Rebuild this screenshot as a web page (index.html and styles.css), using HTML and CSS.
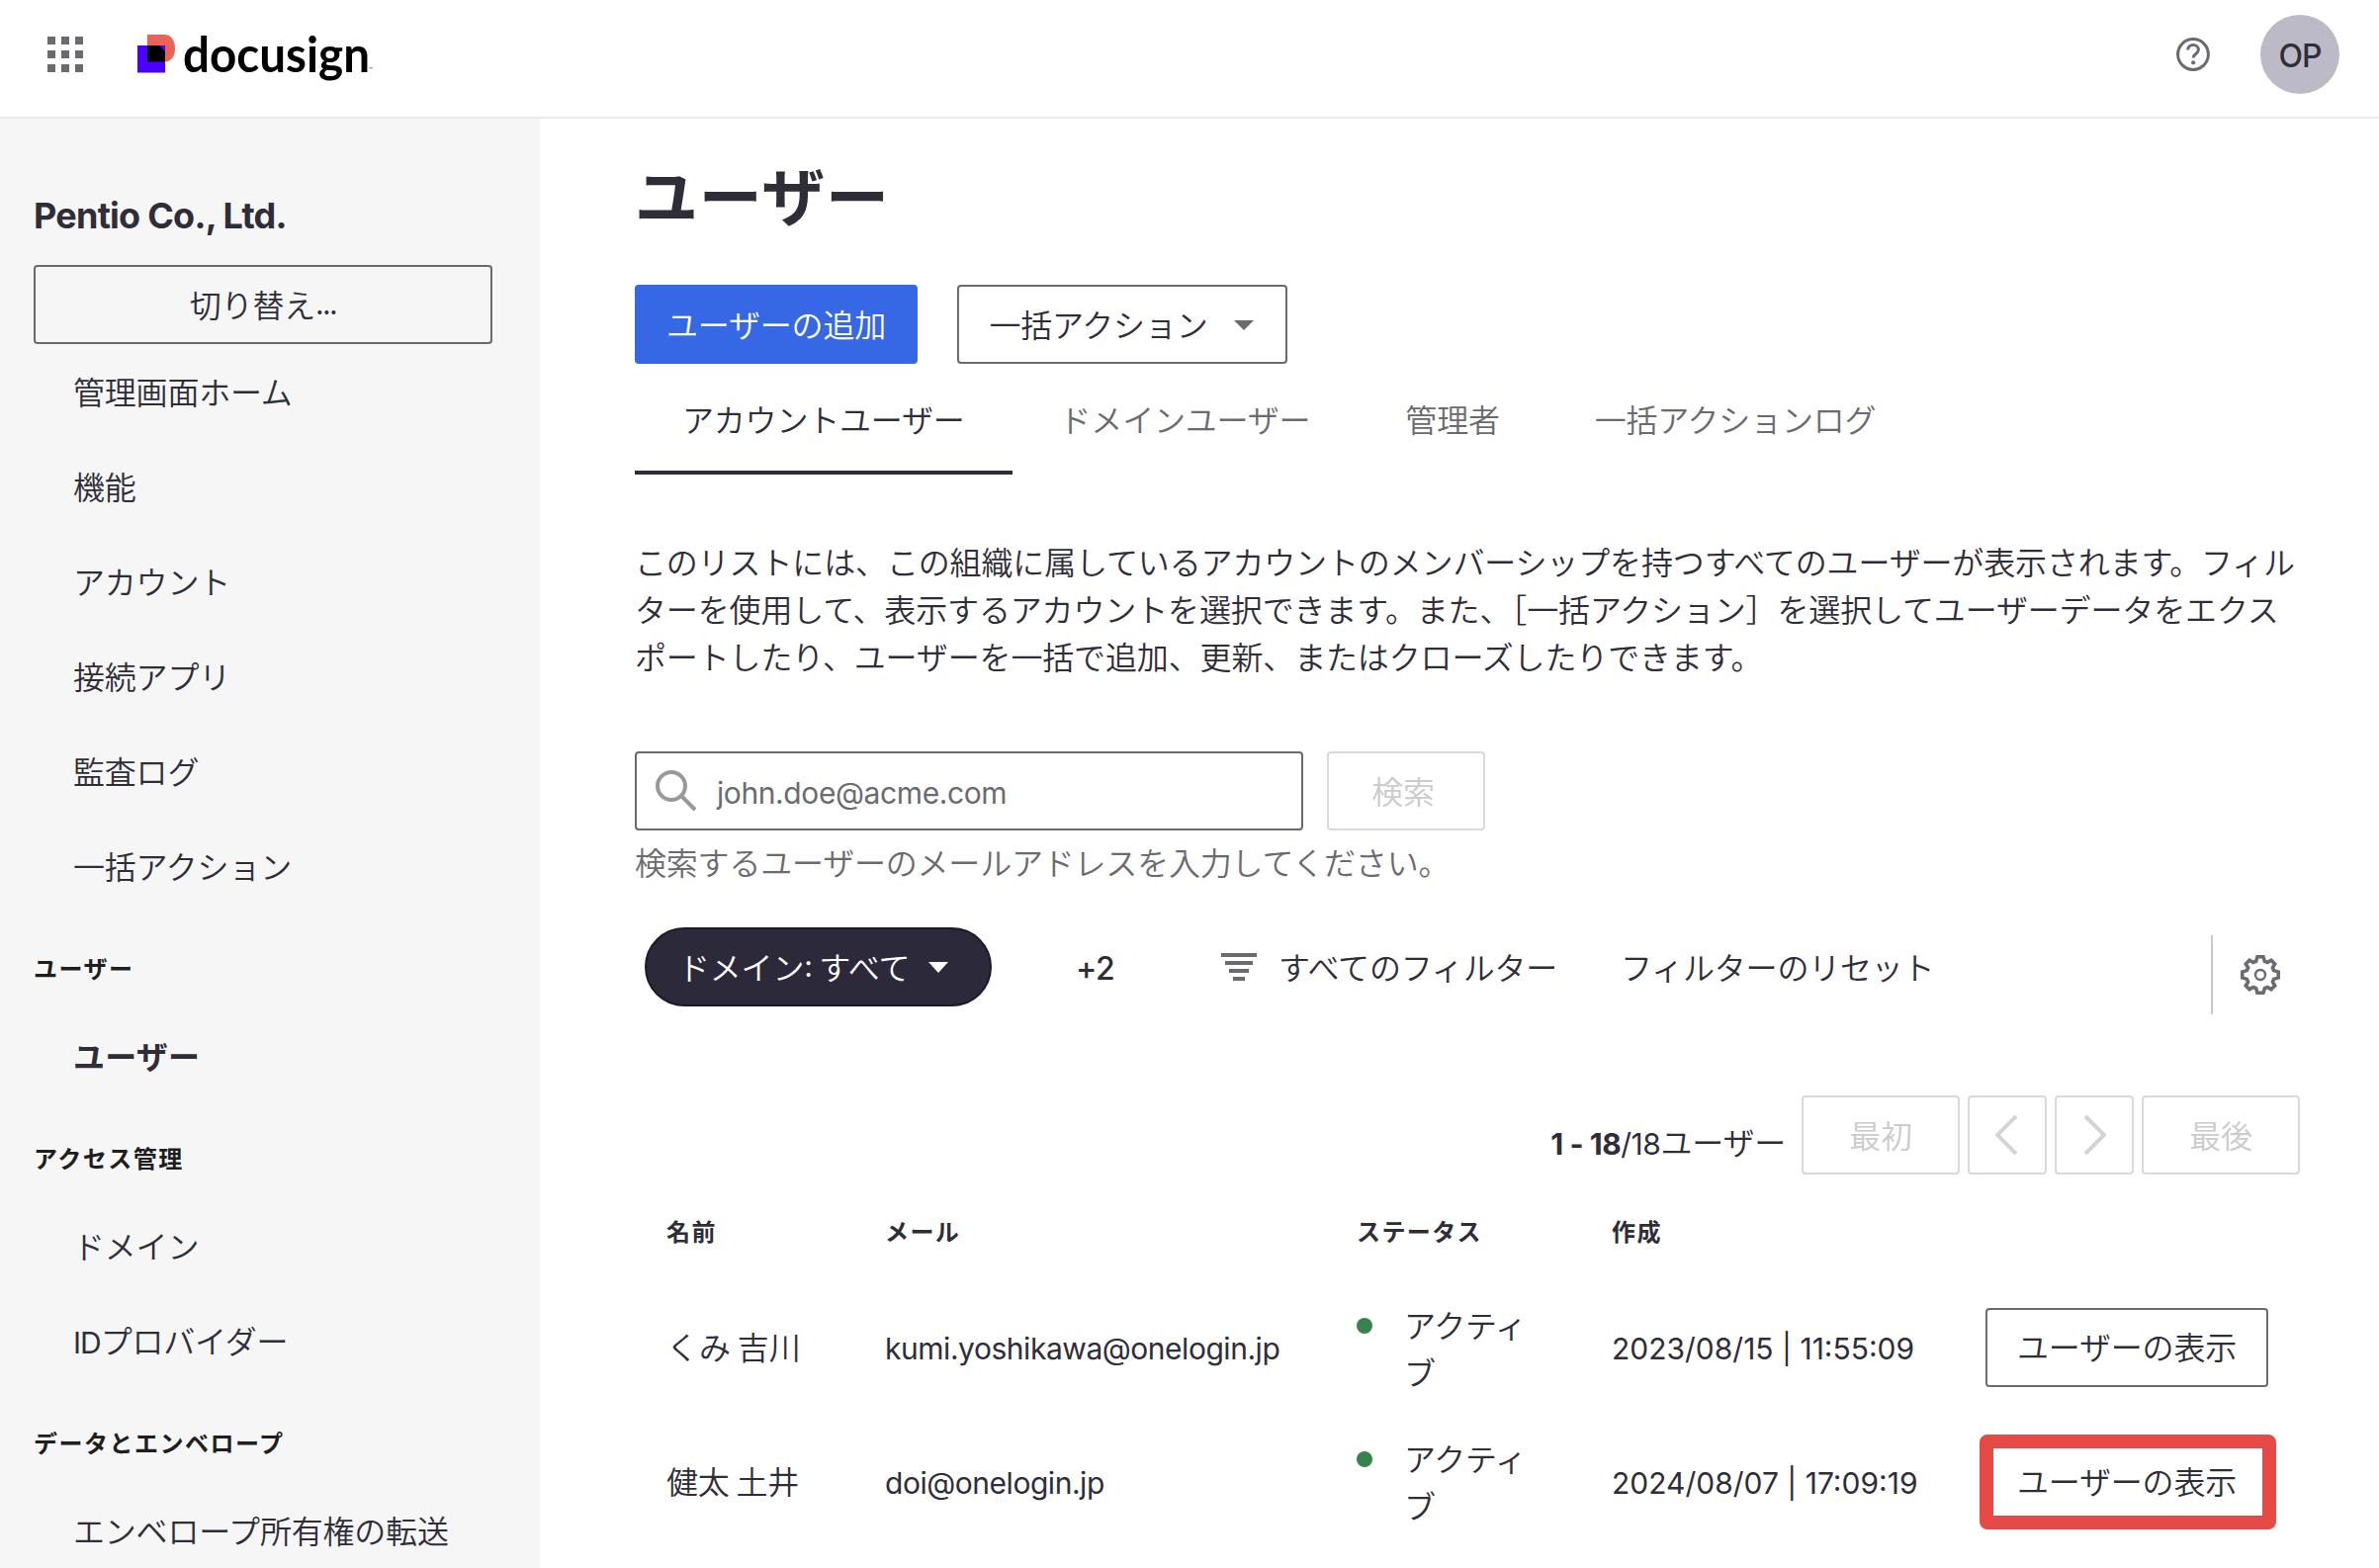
FILE: index.html
```
<!DOCTYPE html>
<html lang="ja">
<head>
    <meta charset="UTF-8">
    <meta name="viewport" content="width=device-width, initial-scale=1.0">
    <title>ユーザー - Docusign Admin</title>
    <link rel="stylesheet" href="styles.css">
</head>
<body>
    <header class="header">
        <div class="header-left">
            <svg class="apps-icon" width="36" height="36" viewBox="0 0 36 36" fill="#6b6a71">
                <path d="M0 0h8v8H0zM14 0h8v8h-8zM28 0h8v8h-8zM0 14h8v8H0zM14 14h8v8h-8zM28 14h8v8h-8zM0 28h8v8H0zM14 28h8v8h-8zM28 28h8v8h-8z"/>
            </svg>
            <svg class="logo" width="244" height="60" viewBox="0 0 244 60">
                <path d="M10 7h17c7 0 11 6 11 14s-4 13.500-10 13.500H10z" fill="#ed6257"/>
                <path d="M0 18h28v27.500H0z" fill="#4c00ff"/>
                <path d="M10 18h12l6 6v10.500H10z" fill="#000"/>
                <text class="logo-text" x="46" y="45" textLength="189" lengthAdjust="spacingAndGlyphs">docusign</text>
                <text class="logo-tm" x="234" y="45">™</text>
            </svg>
        </div>
        <div class="header-right">
            <svg width="34" height="34" viewBox="0 0 34 34" fill="none" stroke="#6b6a71" stroke-width="3">
                <circle cx="17" cy="17" r="15.400"/>
                <path d="M11.700 12.500c0-3 2.300-5 5.300-5s5.400 1.900 5.400 4.800c0 4.300-5.200 4-5.200 8.200"/>
                <circle cx="17.200" cy="25.300" r="2.100" fill="#6b6a71" stroke="none"/>
            </svg>
            <div class="avatar">OP</div>
        </div>
    </header>

    <div class="layout">
        <aside class="sidebar">
            <div class="company">Pentio Co., Ltd.</div>
            <button class="btn switch-btn">切り替え<span class="en dots">...</span></button>
            <nav>
                <a class="nav-item">管理画面ホーム</a>
                <a class="nav-item">機能</a>
                <a class="nav-item">アカウント</a>
                <a class="nav-item">接続アプリ</a>
                <a class="nav-item">監査ログ</a>
                <a class="nav-item">一括アクション</a>
                <div class="nav-section">ユーザー</div>
                <a class="nav-item active">ユーザー</a>
                <div class="nav-section">アクセス管理</div>
                <a class="nav-item">ドメイン</a>
                <a class="nav-item"><span class="en id">ID</span>プロバイダー</a>
                <div class="nav-section">データとエンベロープ</div>
                <a class="nav-item">エンベロープ所有権の転送</a>
            </nav>
        </aside>

        <main class="main">
            <h1>ユーザー</h1>
            <div class="actions">
                <button class="btn btn-primary">ユーザーの追加</button>
                <button class="btn btn-menu">一括アクション
                    <svg width="20" height="10" viewBox="0 0 20 10" fill="#6b6a71"><path d="M0 0h20L10 10z"/></svg>
                </button>
            </div>

            <div class="tabs">
                <a class="tab active">アカウントユーザー</a>
                <a class="tab">ドメインユーザー</a>
                <a class="tab">管理者</a>
                <a class="tab">一括アクションログ</a>
            </div>

            <p class="description">このリストには、この組織に属しているアカウントのメンバーシップを持つすべてのユーザーが表示されます。フィル<br>ターを使用して、表示するアカウントを選択できます。また、［一括アクション］を選択してユーザーデータをエクス<br>ポートしたり、ユーザーを一括で追加、更新、またはクローズしたりできます。</p>

            <div class="search">
                <div class="search-box">
                    <svg width="42" height="42" viewBox="0 0 42 42" fill="none" stroke="#999" stroke-width="4">
                        <circle cx="16" cy="16" r="14"/>
                        <path d="M26 26l14 14"/>
                    </svg>
                    <span class="en placeholder">john.doe@acme.com</span>
                </div>
                <button class="btn btn-disabled search-btn">検索</button>
            </div>
            <div class="hint">検索するユーザーのメールアドレスを入力してください。</div>

            <div class="filters">
                <button class="pill">ドメイン<span class="en colon">:&nbsp;</span>すべて
                    <svg width="20" height="11" viewBox="0 0 20 11" fill="#fff"><path d="M0 0h20L10 11z"/></svg>
                </button>
                <span class="more en">+2</span>
                <svg class="filter-icon" width="36" height="28" viewBox="0 0 36 28" fill="#6b6a71">
                    <path d="M0 0h36v4H0zM4 8h28v4H4zM8 16h20v4H8zM12 24h12v4H12z"/>
                </svg>
                <span class="filter-link">すべてのフィルター</span>
                <span class="filter-link reset">フィルターのリセット</span>
                <div class="settings">
                    <svg width="42" height="42" viewBox="-21 -21 42 42" fill="none" stroke="#6b6a71" stroke-width="3.600">
                        <path d="M-3-18.200H3L4.400-13.600 7.200-12.400 11-14.700 14.700-11 12.400-7.200 13.600-4.400 18.200-3V3L13.600 4.400 12.400 7.200 14.700 11 11 14.700 7.200 12.400 4.400 13.600 3 18.200H-3L-4.400 13.600-7.200 12.400-11 14.700-14.700 11-12.400 7.200-13.600 4.400-18.200 3V-3L-13.600-4.400-12.400-7.200-14.700-11-11-14.700-7.200-12.400-4.400-13.600z"/>
                        <circle r="5" stroke-width="2.400"/>
                    </svg>
                </div>
            </div>

            <div class="pager">
                <span class="pager-count"><span class="en"><b>1 - 18</b>/18</span>ユーザー</span>
                <button class="btn btn-disabled">最初</button>
                <button class="btn btn-disabled btn-icon">
                    <svg width="24" height="42" viewBox="0 0 24 42" fill="none" stroke="#d4d4d6" stroke-width="4"><path d="M21 2L2 21l19 19"/></svg>
                </button>
                <button class="btn btn-disabled btn-icon">
                    <svg width="24" height="42" viewBox="0 0 24 42" fill="none" stroke="#d4d4d6" stroke-width="4"><path d="M3 2l19 19L3 40"/></svg>
                </button>
                <button class="btn btn-disabled">最後</button>
            </div>

            <table class="users">
                <colgroup>
                    <col class="col-name"><col class="col-mail"><col class="col-status"><col class="col-created"><col>
                </colgroup>
                <thead>
                    <tr><th>名前</th><th>メール</th><th>ステータス</th><th>作成</th><th></th></tr>
                </thead>
                <tbody>
                    <tr>
                        <td class="name">くみ <span>吉川</span></td>
                        <td class="en mail">kumi.yoshikawa@onelogin.jp</td>
                        <td><div class="status"><i class="dot"></i><span>アクティブ</span></div></td>
                        <td class="en date">2023/08/15 | 11:55:09</td>
                        <td><button class="btn">ユーザーの表示</button></td>
                    </tr>
                    <tr>
                        <td class="name">健太 <span>土井</span></td>
                        <td class="en mail">doi@onelogin.jp</td>
                        <td><div class="status"><i class="dot"></i><span>アクティブ</span></div></td>
                        <td class="en date">2024/08/07 | 17:09:19</td>
                        <td><button class="btn highlight">ユーザーの表示</button></td>
                    </tr>
                </tbody>
            </table>
        </main>
    </div>
</body>
</html>
```
FILE: styles.css
```
* {
    box-sizing: border-box;
}
body {
    margin: 0;
    height: 1586px;
    overflow: hidden;
    display: flex;
    flex-direction: column;
    background-color: #fff;
    color: #2f2d38;
    font-family: "Noto Sans CJK JP", sans-serif;
    font-weight: 350;
    font-size: 32px;
    line-height: 48px;
    letter-spacing: -0.2px;
}
svg {
    display: block;
    flex: none;
}
.en {
    font-family: Inter, "Noto Sans CJK JP", sans-serif;
    font-weight: 400;
    font-size: 30px;
    letter-spacing: -0.46px;
}
.dots {
    letter-spacing: -1.6px;
}
.id,
.colon {
    letter-spacing: -1px;
}

/* header */
.header {
    flex: none;
    display: flex;
    justify-content: space-between;
    height: 120px;
    padding: 15px 40px 0 48px;
    border-bottom: 2px solid #e9e9e9;
}
.header-left {
    display: flex;
}
.apps-icon {
    margin-top: 22px;
}
.logo {
    margin: 13px 0 0 55px;
    overflow: visible;
}
.logo-text {
    font-family: Lato, sans-serif;
    font-weight: 700;
    font-size: 49px;
    letter-spacing: 0;
}
.logo-tm {
    font-family: Inter, sans-serif;
    font-size: 6px;
    letter-spacing: 0;
}
.header-right {
    display: flex;
    align-items: center;
    gap: 51px;
    height: 80px;
}
.avatar {
    width: 80px;
    height: 80px;
    border-radius: 50%;
    background-color: #bdbac8;
    font-family: Inter, sans-serif;
    font-weight: 550;
    font-size: 32px;
    line-height: 84px;
    letter-spacing: -1px;
    text-align: center;
}

.layout {
    flex: 1;
    min-height: 0;
    display: flex;
}

/* sidebar */
.sidebar {
    flex: none;
    width: 546px;
    padding: 70px 48px 0 34px;
    background-color: #f6f6f6;
    overflow: hidden;
}
.company {
    height: 78px;
    line-height: 56px;
    font-family: Inter, sans-serif;
    font-weight: 650;
    font-size: 36px;
    letter-spacing: -0.75px;
}
.switch-btn {
    width: 464px;
}
.nav-item {
    display: block;
    height: 96px;
    padding-left: 40px;
    line-height: 94px;
    white-space: nowrap;
}
.nav-item.active {
    font-weight: 700;
    letter-spacing: 0.2px;
}
.nav-section {
    height: 96px;
    padding-top: 31px;
    color: #1e1e1e;
    font-weight: 700;
    font-size: 24px;
    letter-spacing: 1.5px;
}

/* buttons */
.btn {
    flex: none;
    display: flex;
    align-items: center;
    justify-content: center;
    height: 80px;
    padding: 0 30px 3px;
    border: 2px solid #6b6a71;
    border-radius: 4px;
    background: transparent;
    color: inherit;
    font: inherit;
    letter-spacing: inherit;
    white-space: nowrap;
}
.btn-primary {
    width: 286px;
    border-color: #3668e6;
    background-color: #3668e6;
    color: #fff;
}
.btn-menu {
    width: 334px;
    gap: 26px;
    padding-right: 32px;
}
.btn-menu svg {
    margin-top: 4px;
}
.btn-disabled {
    width: 160px;
    border-color: #d9d9db;
    color: #cbcbcd;
}
.btn-icon {
    width: 80px;
    padding: 0;
}

/* main */
.main {
    width: 1780px;
    padding-left: 96px;
}
h1 {
    margin: 0;
    padding-top: 27px;
    height: 168px;
    font-size: 64px;
    font-weight: 700;
    line-height: 96px;
    letter-spacing: 0.8px;
}
.actions {
    display: flex;
    gap: 40px;
}
.tabs {
    display: flex;
    height: 112px;
}
.tab {
    padding: 0 48px;
    line-height: 110px;
    color: #6b6a71;
}
.tab.active {
    border-bottom: 4px solid #2f2d38;
    color: #2f2d38;
}
.description {
    margin: 63px 0 73px;
    letter-spacing: -0.14px;
    white-space: nowrap;
}
.search {
    display: flex;
    gap: 24px;
}
.search-box {
    display: flex;
    align-items: center;
    gap: 20px;
    width: 676px;
    height: 80px;
    padding-left: 19px;
    border: 2px solid #6b6a71;
    border-radius: 4px;
}
.placeholder {
    padding-top: 4px;
    color: #6b6a71;
    letter-spacing: -0.4px;
}
.search-btn {
    padding-right: 36px;
}
.hint {
    margin-top: 7px;
    color: #6b6a71;
}

/* filters */
.filters {
    display: flex;
    align-items: center;
    height: 80px;
    margin: 43px 0 90px;
    padding-left: 10px;
    white-space: nowrap;
}
.pill {
    display: flex;
    align-items: center;
    width: 351px;
    height: 80px;
    padding: 0 0 2px 32px;
    border: 2px solid #1c1a27;
    border-radius: 40px;
    background-color: #2c293a;
    color: #fff;
    font: inherit;
    letter-spacing: inherit;
}
.pill svg {
    margin: 2px 0 0 19px;
}
.more {
    width: 40px;
    margin: 3px 107px 0 85px;
    font-size: 32px;
    font-weight: 500;
}
.filter-icon {
    margin-right: 22px;
}
.filter-link {
    padding-bottom: 2px;
}
.reset {
    margin-left: 64px;
}
.settings {
    display: flex;
    align-items: center;
    height: 80px;
    margin: 16px 19px 0 auto;
    padding-left: 27px;
    border-left: 2px solid #c9c8cc;
}

/* pager */
.pager {
    display: flex;
    justify-content: flex-end;
    gap: 8px;
}
.pager-count {
    margin: 22px 8px 0 0;
}

/* table */
.users {
    width: 1684px;
    border-collapse: collapse;
    table-layout: fixed;
}
.col-name {
    width: 221px;
}
.col-mail {
    width: 477px;
}
.col-status {
    width: 258px;
}
.col-created {
    width: 378px;
}
.users th {
    height: 107px;
    padding: 7px 0 0 32px;
    font-size: 24px;
    font-weight: 700;
    letter-spacing: 1.4px;
    text-align: left;
}
.users td {
    height: 135.5px;
    padding: 0 32px;
    white-space: nowrap;
}
.users .name {
    padding-bottom: 3px;
}
.users .mail,
.users .date {
    padding-top: 3px;
}
.users .date {
    letter-spacing: 0;
}
.status {
    display: flex;
    gap: 32px;
    white-space: normal;
}
.dot {
    flex: none;
    width: 16px;
    height: 16px;
    margin-top: 18px;
    border-radius: 50%;
    background-color: #37834b;
}
.users .btn {
    width: 286px;
}
/* callout frame around the button */
.highlight {
    position: relative;
}
.highlight::after {
    content: "";
    position: absolute;
    inset: -9px -10px -11px -8px;
    border: 14px solid #e64a46;
    border-radius: 8px;
}
```
